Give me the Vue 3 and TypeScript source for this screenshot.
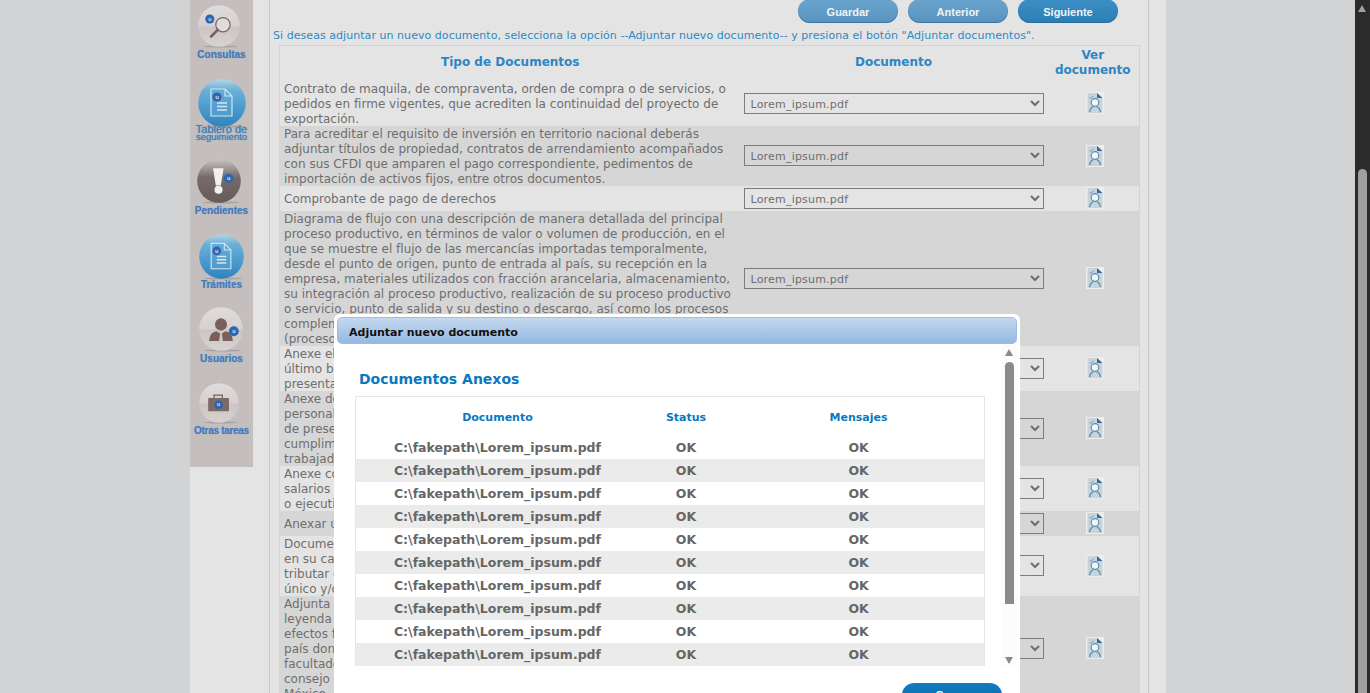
<script setup lang="ts">
interface Row { text: string; shade: boolean }
const rows: Row[] = [
  { shade: false, text: 'Contrato de maquila, de compraventa, orden de compra o de servicios, o\npedidos en firme vigentes, que acrediten la continuidad del proyecto de\nexportación.' },
  { shade: true, text: 'Para acreditar el requisito de inversión en territorio nacional deberás\nadjuntar títulos de propiedad, contratos de arrendamiento acompañados\ncon sus CFDI que amparen el pago correspondiente, pedimentos de\nimportación de activos fijos, entre otros documentos.' },
  { shade: false, text: 'Comprobante de pago de derechos' },
  { shade: true, text: 'Diagrama de flujo con una descripción de manera detallada del principal\nproceso productivo, en términos de valor o volumen de producción, en el\nque se muestre el flujo de las mercancías importadas temporalmente,\ndesde el punto de origen, punto de entrada al país, su recepción en la\nempresa, materiales utilizados con fracción arancelaria, almacenamiento,\nsu integración al proceso productivo, realización de su proceso productivo\no servicio, punto de salida y su destino o descargo, así como los procesos\ncomplementarios que se realicen\n(proceso de submanufactura).' },
  { shade: false, text: 'Anexe el estado de situación financiera del\núltimo balance general y la última declaración\npresentada.' },
  { shade: true, text: 'Anexe documento que acredite al\npersonal contratado y la constancia\nde presentación de las cuotas y el\ncumplimiento de obligaciones de los\ntrabajadores.' },
  { shade: false, text: 'Anexe constancia del pago de\nsalarios y cuotas del personal\no ejecutivos.' },
  { shade: true, text: 'Anexar último recibo.' },
  { shade: false, text: 'Documento que acredite la situación\nen su caso del contribuyente\ntributar conforme al registro\núnico y/o clave.' },
  { shade: true, text: 'Adjunta el documento con la\nleyenda correspondiente para\nefectos fiscales en el\npaís donde se encuentre\nfacultado el representante o\nconsejo de administración en\nMéxico.' },
]

const uploads: number[] = [1, 2, 3, 4, 5, 6, 7, 8, 9, 10]

type Kind = 'search' | 'doc' | 'alert' | 'user' | 'case'
interface NavItem { kind: Kind; cls: string; labels: string[]; tone: string }
const nav: NavItem[] = [
  { kind: 'search', cls: 'n-search', labels: ['Consultas'], tone: 'light' },
  { kind: 'doc', cls: 'n-board', labels: ['Tablero de', 'seguimiento'], tone: 'blue' },
  { kind: 'alert', cls: 'n-alert', labels: ['Pendientes'], tone: 'dark' },
  { kind: 'doc', cls: 'n-proc', labels: ['Trámites'], tone: 'blue' },
  { kind: 'user', cls: 'n-user', labels: ['Usuarios'], tone: 'light' },
  { kind: 'case', cls: 'n-case', labels: ['Otras tareas'], tone: 'light' },
]
</script>

<template>
  <div class="page">
    <div class="shell">
      <aside class="side">
        <div v-for="item in nav" :key="item.cls" class="nav" :class="item.cls">
          <svg class="orb" viewBox="0 0 48 48">
            <defs>
              <linearGradient id="gLight" x1="0" y1="0" x2="0" y2="1"><stop offset="0" stop-color="#e0dcdb" /><stop offset=".5" stop-color="#d6d1d0" /><stop offset=".52" stop-color="#cbc5c4" /><stop offset="1" stop-color="#d8d3d2" /></linearGradient>
              <linearGradient id="gBlue" x1="0" y1="0" x2="0" y2="1"><stop offset="0" stop-color="#b5d5e6" /><stop offset=".22" stop-color="#6cb0d8" /><stop offset=".6" stop-color="#4b9bcd" /><stop offset="1" stop-color="#2f83bd" /></linearGradient>
              <linearGradient id="gDark" x1="0" y1="0" x2="0" y2="1"><stop offset="0" stop-color="#c9c3c1" /><stop offset=".42" stop-color="#75696a" /><stop offset="1" stop-color="#675b59" /></linearGradient>
            </defs>
            <ellipse cx="26" cy="47.4" rx="20" ry="1.1" fill="#a9a4a2" />
            <circle cx="24" cy="24" r="23.8" :fill="item.tone === 'blue' ? 'url(#gBlue)' : item.tone === 'dark' ? 'url(#gDark)' : 'url(#gLight)'" />
            <template v-if="item.kind === 'search'">
              <circle cx="28.5" cy="22.5" r="8.2" fill="#dfdcdb" stroke="#7b6663" stroke-width="1.4" />
              <path d="M22.5 28.5 L15 36" stroke="#7b5f5c" stroke-width="3" stroke-linecap="round" />
              <circle cx="13.5" cy="16" r="5.2" fill="#2f64ae" />
              <text x="13.5" y="18" class="u">u</text>
            </template>
            <template v-if="item.kind === 'doc'">
              <path d="M13 10 H27 L34 17 V37 H13 Z M27 10 V17 H34" fill="#5ea6d2" fill-opacity=".5" stroke="#cfe5f2" stroke-width="1.2" />
              <path d="M19 24 H29 M19 27.5 H29 M19 31 H29" stroke="#d3e8f4" stroke-width="1.5" />
              <circle cx="19" cy="18" r="4.6" fill="#2f64ae" />
              <text x="19" y="20" class="u">u</text>
            </template>
            <template v-if="item.kind === 'alert'">
              <path d="M17.5 10 H29 L26 29 H20.5 Z" fill="#f2f0ef" />
              <circle cx="23.5" cy="33.5" r="4.4" fill="#f2f0ef" />
              <circle cx="34.5" cy="21" r="5.2" fill="#2f64ae" />
              <text x="34.5" y="23" class="u">u</text>
            </template>
            <template v-if="item.kind === 'user'">
              <circle cx="24" cy="19" r="6.6" fill="#7b5f5c" />
              <path d="M11 37 Q11.5 28 19 26.5 L23 29 L22 37 Z M37 37 Q36.5 28 29 26.5 L25 29 L26 37 Z" fill="#7b5f5c" />
              <circle cx="38" cy="26.5" r="5.4" fill="#2f64ae" />
              <text x="38" y="28.5" class="u">u</text>
            </template>
            <template v-if="item.kind === 'case'">
              <path d="M18 18 V14.5 H28 V18" fill="none" stroke="#7b5f5c" stroke-width="1.5" />
              <rect x="11" y="18" width="25" height="16" rx="1" fill="#7f6966" />
              <circle cx="23.5" cy="26" r="5.2" fill="#2f64ae" />
              <text x="23.5" y="28" class="u">u</text>
            </template>
          </svg>
          <div v-for="(l, i) in item.labels" :key="l" class="nav-label" :class="{ sub: i === 1, big: item.labels.length === 2 && i === 0 }">{{ l }}</div>
        </div>
      </aside>

      <main class="main">
        <div class="frame">
          <div class="actions">
            <button class="btn">Guardar</button>
            <button class="btn">Anterior</button>
            <button class="btn dark">Siguiente</button>
          </div>
          <p class="hint">Si deseas adjuntar un nuevo documento, selecciona la opción --Adjuntar nuevo documento-- y presiona el botón "Adjuntar documentos".</p>
          <table class="docs">
            <colgroup><col class="c1" /><col class="c2" /><col class="c3" /></colgroup>
            <thead>
              <tr><th>Tipo de Documentos</th><th>Documento</th><th>Ver documento</th></tr>
            </thead>
            <tbody>
              <tr v-for="(r, i) in rows" :key="i" :class="{ shade: r.shade }">
                <td class="t"><div class="t-in">{{ r.text }}</div></td>
                <td class="s"><select class="pick"><option>Lorem_ipsum.pdf</option></select></td>
                <td class="v">
                  <svg class="view" viewBox="0 0 18 22">
                    <rect x="0" y="0" width="18" height="22" fill="#ededed" />
                    <path d="M1.5 1 H11 L16.5 6 V21 H1.5 Z" fill="#cbd3d8" />
                    <path d="M11 1 L16.5 6 H11 Z" fill="#2a6fa8" />
                    <path d="M3.5 5 L5 6.5 L7.5 3.5" fill="none" stroke="#6fa0c0" stroke-width="1" />
                    <circle cx="9" cy="10.5" r="3.8" fill="#f4f7f8" stroke="#4f8db3" stroke-width="1.2" />
                    <path d="M3.5 20 Q4.5 15.5 7.5 14.5 M10.5 14.5 Q13.5 15.5 14.5 20" fill="none" stroke="#4f8db3" stroke-width="1.3" />
                  </svg>
                </td>
              </tr>
            </tbody>
          </table>
        </div>
      </main>
    </div>

    <div class="gbar">
      <span class="g-up"></span>
      <span class="g-thumb"></span>
    </div>

    <section class="modal">
      <header class="m-title">Adjuntar nuevo documento</header>
      <div class="m-body">
        <div class="m-content">
          <h2 class="m-h">Documentos Anexos</h2>
          <table class="up">
            <colgroup><col class="u1" /><col class="u2" /><col class="u3" /></colgroup>
            <thead><tr><th>Documento</th><th>Status</th><th>Mensajes</th></tr></thead>
            <tbody>
              <tr v-for="n in uploads" :key="n" :class="{ alt: n % 2 === 0 }">
                <td>C:\fakepath\Lorem_ipsum.pdf</td><td>OK</td><td>OK</td>
              </tr>
            </tbody>
          </table>
        </div>
        <div class="m-bar">
          <span class="m-up"></span>
          <span class="m-thumb"></span>
          <span class="m-down"></span>
        </div>
      </div>
      <div class="m-foot"><button class="close">Cerrar</button></div>
    </section>
  </div>
</template>

<style>
html, body { margin: 0; overflow: hidden; }
</style>

<style scoped>
.page {
  position: relative;
  height: 693px;
  overflow: hidden;
  background: #d2d3d5;
  display: flex;
  justify-content: space-between;
  font-family: "DejaVu Sans", sans-serif;
}
.shell {
  margin-left: 190px;
  width: 976px;
  height: 693px;
  background: #e4e4e4;
  display: flex;
  flex: none;
}
.side {
  width: 63px;
  height: 467px;
  background: #c4bfbe;
  flex: none;
  display: flex;
  flex-direction: column;
  font-family: "Liberation Sans", Arial, sans-serif;
}
.nav { display: flex; flex-direction: column; align-items: center; }
.orb { display: block; overflow: visible; margin-bottom: 3px; }
.u {
  font: 700 6px "Liberation Sans", Arial, sans-serif;
  fill: #d5e3f5;
  text-anchor: middle;
}
.nav-label {
  font-size: 10px;
  line-height: 10px;
  font-weight: 700;
  color: #4279bd;
  white-space: nowrap;
  text-shadow: 0 0 1px rgba(66, 121, 189, .5);
}
.nav-label.big { font-size: 11px; line-height: 8px; font-weight: 400; color: #4080b8; text-shadow: 0 0 1px #4080b8; }
.nav-label.sub { font-size: 9.5px; line-height: 7px; font-weight: 400; color: #4080b8; text-shadow: 0 0 1px #4080b8; }
.n-search { margin-top: 5px; }
.n-search .orb { width: 42px; height: 42px; margin-left: -5px; }
.n-board { margin-top: 19px; }
.n-board .orb { width: 48px; height: 48px; margin-bottom: -2px; }
.n-alert { margin-top: 19px; }
.n-alert .orb { width: 44px; height: 44px; margin-left: -6px; }
.n-proc { margin-top: 18px; }
.n-proc .orb { width: 45px; height: 45px; margin-bottom: 1px; }
.n-user { margin-top: 17px; }
.n-user .orb { width: 44px; height: 44px; margin-left: -1px; }
.n-case { margin-top: 19px; }
.n-case .orb { width: 40px; height: 40px; margin-left: -5px; }
.n-case .nav-label { letter-spacing: -.3px; }

.main { flex: 1; padding-left: 16px; min-width: 0; }
.frame {
  width: 880px;
  height: 693px;
  box-sizing: border-box;
  border-left: 1px solid #c8c8c8;
  border-right: 1px solid #c8c8c8;
  padding-left: 3px;
}
.actions {
  display: flex;
  justify-content: flex-end;
  gap: 10px;
  height: 23px;
  padding-right: 30px;
}
.btn {
  width: 100px;
  height: 24px;
  margin-top: -1px;
  padding: 2px 0 0;
  border: 0;
  border-radius: 12px;
  background: linear-gradient(#6aa5cf, #5893bf);
  box-shadow: inset 0 -1px 1px rgba(40, 90, 130, .55);
  color: #eef4f8;
  font: 700 11px "Liberation Sans", Arial, sans-serif;
}
.btn.dark { background: linear-gradient(#3d8fc4, #2a7fb6); }
.hint {
  margin: 0;
  padding-top: 6px;
  font-size: 11px;
  line-height: 14px;
  letter-spacing: .05px;
  color: #2b8ac4;
  white-space: nowrap;
}
.docs {
  margin: 2px 0 0 6px;
  width: 860px;
  border-collapse: collapse;
  table-layout: fixed;
  border: 1px solid #d4d4d4;
  font-size: 12px;
  color: #6e6e6e;
}
.c1 { width: 461px; }
.c2 { width: 306px; }
.c3 { width: 93px; }
.docs th {
  height: 35px;
  padding: 0 0 2px;
  box-sizing: border-box;
  color: #2c86c4;
  font-size: 12px;
  line-height: 15px;
  font-weight: 700;
}
.docs th:last-child { padding: 0; }
.docs td { padding: 0; }
.docs tr.shade { background: #d6d6d6; }
.t { padding-left: 4px !important; line-height: 15px; white-space: pre-line; letter-spacing: .01px; }
.t-in { margin: 1px 0 -1px; }
.s { text-align: center; }
.pick {
  width: 300px;
  height: 21px;
  display: block;
  margin: 2px auto;
  border: 1px solid #7c7c7c;
  background: transparent;
  color: #6e6e6e;
  font: 11px "DejaVu Sans", sans-serif;
  letter-spacing: .2px;
  padding: 2px 0 0 2px;
}
.v { text-align: center; }
.view { width: 18px; height: 22px; display: block; margin: 0 auto; position: relative; left: 2px; }

.gbar {
  width: 15px;
  flex: none;
  background: #2b2b2b;
  position: relative;
}
.g-up {
  position: absolute; left: 3px; top: 5px;
  border-left: 4.5px solid transparent;
  border-right: 4.5px solid transparent;
  border-bottom: 7px solid #a0a0a0;
}
.g-thumb {
  position: absolute; left: 3px; top: 169px; bottom: 0; width: 9px;
  background: #a0a0a0;
  border-radius: 4.5px 4.5px 0 0;
}

.modal {
  position: absolute;
  left: 334px;
  top: 314px;
  width: 686px;
  height: 395px;
  background: #fff;
  border-radius: 6px;
  box-sizing: border-box;
  padding: 3px 3px 0 3px;
}
.m-title {
  height: 27px;
  box-sizing: border-box;
  border: 1px solid #9dbde6;
  border-radius: 5px;
  background: linear-gradient(#c5d9ef, #95b8e2);
  font-size: 11px;
  font-weight: 700;
  line-height: 29px;
  color: #111;
  padding-left: 11px;
}
.m-body { display: flex; height: 322px; }
.m-content { flex: 1; padding: 0 0 0 18px; min-width: 0; height: 322px; overflow: hidden; }
.m-h {
  margin: 27px 0 0 4px;
  font-size: 14px;
  line-height: 17px;
  font-weight: 700;
  color: #0a78c0;
}
.up {
  margin-top: 8px;
  width: 630px;
  border-collapse: collapse;
  table-layout: fixed;
  border: 1px solid #e6e6e6;
  border-bottom: 0;
}
.u1 { width: 283px; }
.u2 { width: 94px; }
.u3 { width: 251px; }
.up th {
  height: 39px;
  box-sizing: border-box;
  padding: 2px 0 0;
  font-size: 11px;
  font-weight: 700;
  color: #0a78c0;
}
.up td {
  height: 23px;
  padding: 0;
  text-align: center;
  font-size: 12.5px;
  font-weight: 700;
  color: #666;
}
.up tr.alt { background: #ebebeb; }
.m-bar {
  width: 15px;
  flex: none;
  background: #fcfcfc;
  height: 322px;
  position: relative;
}
.m-up {
  position: absolute; left: 3px; top: 5px;
  border-left: 4.5px solid transparent;
  border-right: 4.5px solid transparent;
  border-bottom: 7px solid #8a8a8a;
}
.m-thumb {
  position: absolute; left: 3px; top: 18px; width: 9px; height: 242px;
  background: #8a8a8a;
  border-radius: 4.5px 4.5px 0 0;
}
.m-down {
  position: absolute; left: 3px; top: 313px;
  border-left: 4.5px solid transparent;
  border-right: 4.5px solid transparent;
  border-top: 7px solid #8a8a8a;
}
.m-foot { display: flex; justify-content: flex-end; padding: 17px 15px 0 0; }
.close {
  width: 100px;
  height: 24px;
  border: 0;
  border-radius: 12px;
  background: linear-gradient(#0f7cc0, #0a6aa8);
  color: #fff;
  font: 700 11px "Liberation Sans", Arial, sans-serif;
}
</style>
